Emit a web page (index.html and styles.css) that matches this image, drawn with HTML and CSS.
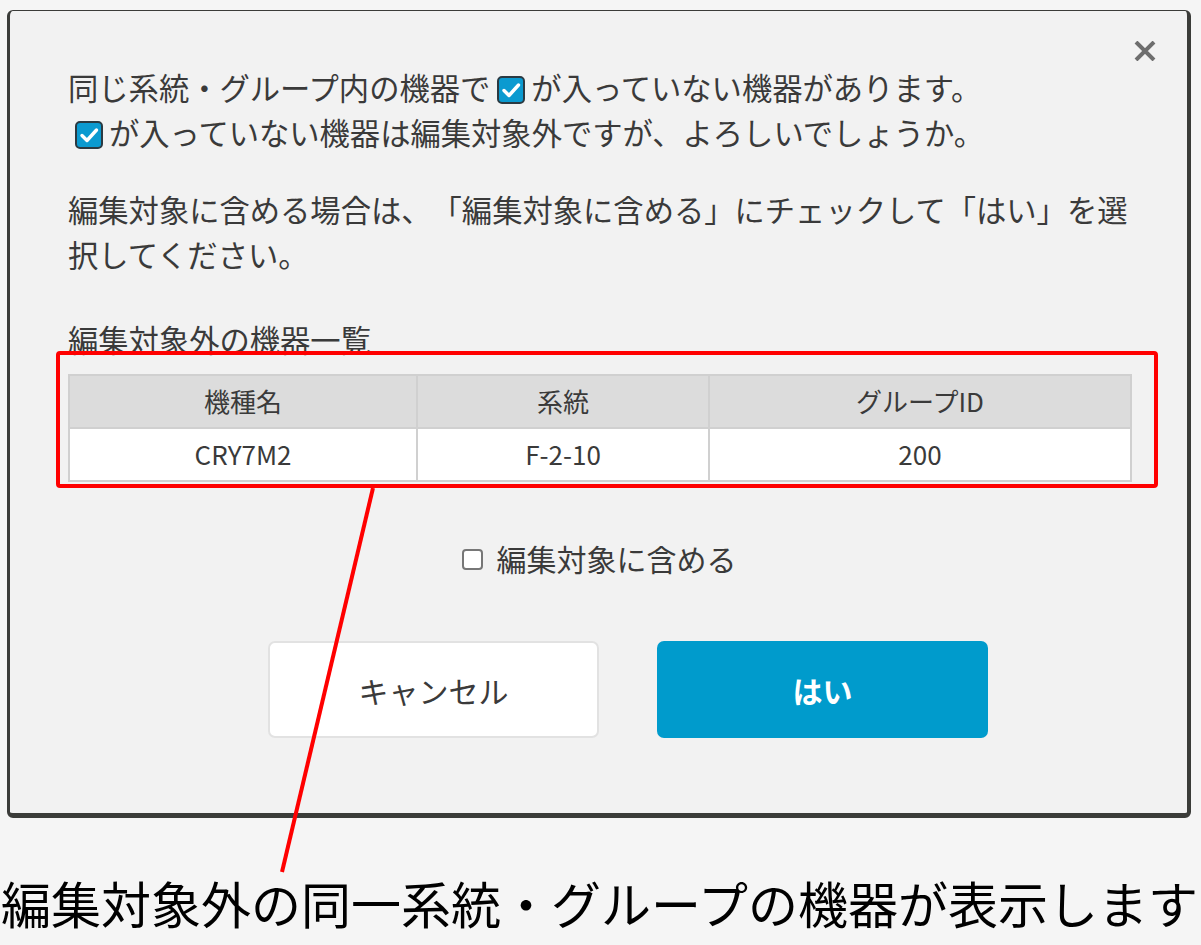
FILE: index.html
```html
<!DOCTYPE html>
<html lang="ja">
<head>
  <meta charset="utf-8">
  <title>編集対象外の機器</title>
  <link rel="stylesheet" href="styles.css">
</head>
<body>
  <div class="stage">
    <div class="dialog">
      <button class="close" aria-label="閉じる">
        <svg width="24" height="20" viewBox="0 0 24 20"><path d="M3 1 L21 19 M21 1 L3 19" stroke="#6e6e6e" stroke-width="4"/></svg>
      </button>

      <p class="msg">同じ系統・グループ内の機器で<span class="chk"><svg width="28" height="28" viewBox="0 0 28 28"><rect x="1" y="1" width="26" height="26" rx="4" fill="#0b9ad0" stroke="#2b3a42" stroke-width="2"/><path d="M7 14.5 L12 19.5 L21.5 9" fill="none" stroke="#fff" stroke-width="3.4" stroke-linecap="round" stroke-linejoin="round"/></svg></span>が入っていない機器があります。<br><span class="chk"><svg width="28" height="28" viewBox="0 0 28 28"><rect x="1" y="1" width="26" height="26" rx="4" fill="#0b9ad0" stroke="#2b3a42" stroke-width="2"/><path d="M7 14.5 L12 19.5 L21.5 9" fill="none" stroke="#fff" stroke-width="3.4" stroke-linecap="round" stroke-linejoin="round"/></svg></span>が入っていない機器は編集対象外ですが、よろしいでしょうか。</p>

      <p class="msg msg-gap">編集対象に含める場合は、「編集対象に含める」にチェックして「はい」を選択してください。</p>

      <p class="list-title">編集対象外の機器一覧</p>
      <table class="devices">
        <thead>
          <tr>
            <th class="col-model">機種名</th>
            <th class="col-line">系統</th>
            <th class="col-group">グループID</th>
          </tr>
        </thead>
        <tbody>
          <tr>
            <td>CRY7M2</td>
            <td>F-2-10</td>
            <td>200</td>
          </tr>
        </tbody>
      </table>

      <label class="include">
        <input type="checkbox" class="include-box">
        <span>編集対象に含める</span>
      </label>

      <div class="actions">
        <button class="btn btn-cancel">キャンセル</button>
        <button class="btn btn-ok">はい</button>
      </div>
    </div>
  </div>

  <p class="caption">編集対象外の同一系統・グループの機器が表示します</p>

  <!-- annotation drawn over the screenshot -->
  <svg class="annotation" width="1201" height="945" viewBox="0 0 1201 945">
    <rect x="58" y="353" width="1098" height="133" rx="2" fill="none" stroke="#ff0000" stroke-width="4"/>
    <path d="M373 488 L282 872" stroke="#ff0000" stroke-width="4"/>
  </svg>
</body>
</html>
```

FILE: styles.css
```css
*{
  box-sizing: border-box;
}

body{
  margin: 0;
  background-color: #f5f5f5;
  font-family: "Noto Sans CJK JP", "Noto Sans", sans-serif;
  color: #3a3a3a;
  text-spacing-trim: space-all;
}

.stage{
  padding: 10px 10px 0 7px;
}

.dialog{
  position: relative;
  width: 1184px;
  background-color: #f2f2f2;
  border-style: solid;
  border-color: #3b3c39;
  border-width: 1px 4px 5px 3px;
  border-radius: 6px;
  padding: 54px 57px 75px 58px;
}

.close{
  position: absolute;
  top: 30px;
  right: 30px;
  padding: 0;
  border: none;
  background: none;
  line-height: 0;
}

.msg{
  margin: 0;
  font-size: 30.3px;
  line-height: 45px;
}
.msg-gap{
  margin-top: 32px;
}

.chk{
  display: inline-block;
  vertical-align: middle;
  margin: -4px 6px 0 7px;
  line-height: 0;
}

.list-title{
  margin: 40px 0 0;
  font-size: 30.3px;
  line-height: 45px;
}

.devices{
  width: 1062px;
  margin-top: 12px;
  border-collapse: collapse;
  table-layout: fixed;
  font-size: 26px;
}
.devices th,
.devices td{
  height: 53px;
  padding: 0 0 3px;
  border: 2px solid #d0d0d0;
  text-align: center;
  font-weight: normal;
  color: #3a3a3a;
}
.devices th{
  background-color: #dcdcdc;
}
.devices td{
  background-color: #fff;
}
.col-model{ width: 348px; }
.col-line{ width: 292px; }
.col-group{ width: 422px; }

.include{
  display: flex;
  justify-content: center;
  align-items: center;
  gap: 14px;
  margin-top: 54px;
  font-size: 30px;
  line-height: 45px;
}
.include-box{
  appearance: none;
  width: 21px;
  height: 21px;
  margin: 2px 0 0;
  border: 2px solid #777;
  border-radius: 4px;
  background-color: #fff;
}

.actions{
  display: flex;
  justify-content: center;
  gap: 58px;
  margin-top: 60px;
  padding-left: 58px;
}

.btn{
  width: 331px;
  height: 97px;
  border-radius: 7px;
  font-family: inherit;
  font-size: 30px;
}
.btn-cancel{
  background-color: #fff;
  border: 2px solid #e2e2e2;
  color: #3a3a3a;
}
.btn-ok{
  background-color: #009bcc;
  border: none;
  color: #fff;
  font-weight: bold;
}

.caption{
  margin: 54px 0 0;
  padding-left: 1px;
  font-size: 50px;
  line-height: 60px;
  color: #000;
  white-space: nowrap;
}

.annotation{
  position: absolute;
  top: 0;
  left: 0;
  pointer-events: none;
}
```
